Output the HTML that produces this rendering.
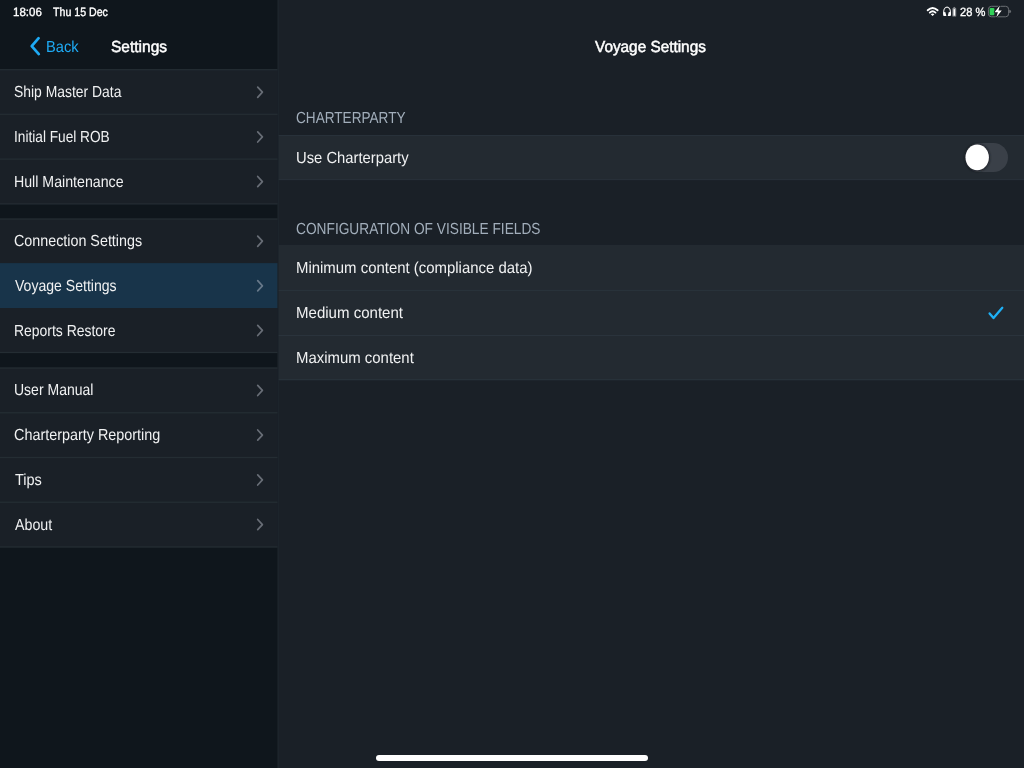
<!DOCTYPE html>
<html><head><meta charset="utf-8">
<style>
*{margin:0;padding:0;box-sizing:border-box}
html,body{width:1024px;height:768px;overflow:hidden;background:#1a2027;font-family:"Liberation Sans",sans-serif;color:#fff}
.abs{position:absolute}
.t{position:absolute;white-space:nowrap;transform-origin:0 0;text-rendering:geometricPrecision}
.c-blue{color:#1eaaf4}
.c-lbl{color:#f0f1f2}
.c-hdr{color:#a2aebb}
</style></head><body>
<svg class="abs" style="left:0;top:0" width="1024" height="768" viewBox="0 0 1024 768" shape-rendering="geometricPrecision">
 <rect x="0" y="0" width="1024" height="768" fill="#1a2027"/>
 <rect x="0" y="0" width="277.6" height="768" fill="#0f161c"/>
 <rect x="0" y="69.7" width="277.6" height="134.20" fill="#1a2027"/>
 <rect x="0" y="69.05" width="277.6" height="1.3" fill="#242d33"/>
 <rect x="0" y="113.65" width="277.6" height="1.3" fill="#242d33"/>
 <rect x="0" y="158.45" width="277.6" height="1.3" fill="#242d33"/>
 <rect x="0" y="203.25" width="277.6" height="1.3" fill="#242d33"/>
 <rect x="0" y="219.0" width="277.6" height="133.50" fill="#1a2027"/>
 <rect x="0" y="218.35" width="277.6" height="1.3" fill="#242d33"/>
 <rect x="0" y="351.85" width="277.6" height="1.3" fill="#242d33"/>
 <rect x="0" y="368.0" width="277.6" height="179.00" fill="#1a2027"/>
 <rect x="0" y="367.35" width="277.6" height="1.3" fill="#242d33"/>
 <rect x="0" y="412.10" width="277.6" height="1.3" fill="#242d33"/>
 <rect x="0" y="456.85" width="277.6" height="1.3" fill="#242d33"/>
 <rect x="0" y="501.60" width="277.6" height="1.3" fill="#242d33"/>
 <rect x="0" y="546.35" width="277.6" height="1.3" fill="#242d33"/>
 <rect x="0" y="263.1" width="277.6" height="44.9" fill="#18344a"/>
 <rect x="277.6" y="0" width="1.1" height="768" fill="#1f272e"/>
 <rect x="278.70000000000005" y="135.2" width="745.30" height="44.6" fill="#232a31"/>
 <rect x="278.70000000000005" y="135.0" width="745.30" height="1" fill="#28313a"/>
 <rect x="278.70000000000005" y="179.1" width="745.30" height="1" fill="#28313a"/>
 <rect x="278.70000000000005" y="244.9" width="745.30" height="135.3" fill="#232a31"/>
 <rect x="278.70000000000005" y="289.90" width="745.30" height="1" fill="#2a333c"/>
 <rect x="278.70000000000005" y="335.00" width="745.30" height="1" fill="#2a333c"/>
 <rect x="278.70000000000005" y="379.20" width="745.30" height="1" fill="#2a333c"/>
</svg>
<svg class="abs" style="left:0;top:0" width="1024" height="768" viewBox="0 0 1024 768">
 <g fill="none" stroke="#c8cdd6" stroke-opacity="0.45" stroke-width="1.7" stroke-linecap="round" stroke-linejoin="round">
  <path d="M257.7 87.1 L262.4 92.2 L257.7 97.3"/>
  <path d="M257.7 131.8 L262.4 136.9 L257.7 142.0"/>
  <path d="M257.7 176.5 L262.4 181.6 L257.7 186.7"/>
  <path d="M257.7 236.1 L262.4 241.2 L257.7 246.3"/>
  <path d="M257.7 280.7 L262.4 285.8 L257.7 290.9"/>
  <path d="M257.7 325.3 L262.4 330.4 L257.7 335.5"/>
  <path d="M257.7 385.3 L262.4 390.4 L257.7 395.5"/>
  <path d="M257.7 430.0 L262.4 435.1 L257.7 440.2"/>
  <path d="M257.7 474.8 L262.4 479.9 L257.7 485.0"/>
  <path d="M257.7 519.5 L262.4 524.6 L257.7 529.7"/>
 </g>
 <path d="M38.6 38.2 L31.7 46.2 L38.8 54.1" fill="none" stroke="#1eaaf4" stroke-width="2.7" stroke-linecap="round" stroke-linejoin="round"/>
 <path d="M989.6 313.4 L993.5 318.0 L1002.3 307.8" fill="none" stroke="#1eb0f5" stroke-width="2.3" stroke-linecap="round" stroke-linejoin="round"/>
 <!-- toggle -->
 <rect x="965" y="143" width="43" height="29" rx="14.5" ry="14.5" fill="#3a4048"/>
 <defs><filter id="sh" x="-50%" y="-50%" width="200%" height="200%"><feGaussianBlur stdDeviation="0.9"/></filter></defs>
 <ellipse cx="977.3" cy="157.6" rx="12.6" ry="13.6" fill="#15191e" opacity="0.75" filter="url(#sh)"/>
 <ellipse cx="977.2" cy="157.4" rx="11.7" ry="12.8" fill="#ffffff"/>
 <!-- home indicator -->
 <rect x="376" y="755" width="272" height="6" rx="3" fill="#ffffff"/>
 <!-- wifi -->
 <g fill="none" stroke="#ffffff" stroke-width="1.9" stroke-linecap="round">
  <path d="M927.7 10.3 Q932.6 5.6 937.6 10.3"/>
  <path d="M929.8 12.6 Q932.6 10.1 935.5 12.6"/>
 </g>
 <path d="M930.8 14.3 L932.6 16.1 L934.4 14.3 Q932.6 12.8 930.8 14.3 Z" fill="#ffffff"/>
 <!-- headphones -->
 <path d="M943.7 13.8 L943.7 11.6 A3.35 4.4 0 0 1 950.4 11.6 L950.4 13.8" fill="none" stroke="#e8e8e8" stroke-width="1.15"/>
 <path d="M943.1 12.2 L945.3 12.0 L946.3 15.6 Q946.3 16.1 945.7 16.1 L944.2 16.1 Q943.1 16.1 943.1 15 Z" fill="#ffffff"/>
 <path d="M951.0 12.2 L948.8 12.0 L947.8 15.6 Q947.8 16.1 948.4 16.1 L949.9 16.1 Q951.0 16.1 951.0 15 Z" fill="#ffffff"/>
 <path d="M952.4 8.4 L954.3 6.7 L956.2 8.4 L956.2 16 Q956.2 16.6 955.6 16.6 L953 16.6 Q952.4 16.6 952.4 16 Z" fill="#8d9094"/>
 <rect x="953.6" y="9.2" width="1.4" height="6.4" fill="#ffffff"/>
 <!-- battery -->
 <rect x="988.4" y="6.3" width="20.2" height="10.5" rx="3" fill="none" stroke="#6a6e73" stroke-width="1"/>
 <path d="M1009.2 9.7 A1.9 1.7 0 0 1 1009.2 13.1 Z" fill="#6a6e73"/>
 <rect x="989.6" y="7.9" width="4.8" height="7.3" rx="1.2" fill="#30d158"/>
 <path d="M999.9 5.4 L994.5 12.2 L997.9 12.2 L996.2 17.6 L1001.8 10.5 L998.4 10.5 Z" fill="#15191e" stroke="#15191e" stroke-width="1.4" stroke-linejoin="round"/>
 <path d="M999.9 5.4 L994.5 12.2 L997.9 12.2 L996.2 17.6 L1001.8 10.5 L998.4 10.5 Z" fill="#ffffff"/>
</svg>
<div class="t " style="left:13.44px;top:5.5px;font-size:12px;line-height:12px;transform:scaleX(0.9586);-webkit-text-stroke:0.35px currentColor;color:#ffffff">18:06</div>
<div class="t " style="left:52.70px;top:5.5px;font-size:12px;line-height:12px;transform:scaleX(0.8855);-webkit-text-stroke:0.35px currentColor;color:#ffffff">Thu 15 Dec</div>
<div class="t c-blue" style="left:46.19px;top:40.2px;font-size:16px;line-height:16px;transform:scaleX(0.9147)">Back</div>
<div class="t " style="left:111.10px;top:40.2px;font-size:16px;line-height:16px;transform:scaleX(0.9690);-webkit-text-stroke:0.5px currentColor;color:#ffffff">Settings</div>
<div class="t " style="left:595.30px;top:39.9px;font-size:16px;line-height:16px;transform:scaleX(0.9586);-webkit-text-stroke:0.5px currentColor;color:#ffffff">Voyage Settings</div>
<div class="t c-lbl" style="left:13.73px;top:85.3px;font-size:16px;line-height:16px;transform:scaleX(0.8691)">Ship Master Data</div>
<div class="t c-lbl" style="left:13.75px;top:130.3px;font-size:16px;line-height:16px;transform:scaleX(0.8545)">Initial Fuel ROB</div>
<div class="t c-lbl" style="left:13.71px;top:175.3px;font-size:16px;line-height:16px;transform:scaleX(0.8861)">Hull Maintenance</div>
<div class="t c-lbl" style="left:13.71px;top:234.1px;font-size:16px;line-height:16px;transform:scaleX(0.8944)">Connection Settings</div>
<div class="t c-lbl" style="left:14.60px;top:279.1px;font-size:16px;line-height:16px;transform:scaleX(0.8783)">Voyage Settings</div>
<div class="t c-lbl" style="left:13.73px;top:324.1px;font-size:16px;line-height:16px;transform:scaleX(0.8713)">Reports Restore</div>
<div class="t c-lbl" style="left:13.72px;top:383.2px;font-size:16px;line-height:16px;transform:scaleX(0.8753)">User Manual</div>
<div class="t c-lbl" style="left:13.70px;top:428.1px;font-size:16px;line-height:16px;transform:scaleX(0.8988)">Charterparty Reporting</div>
<div class="t c-lbl" style="left:14.60px;top:473.1px;font-size:16px;line-height:16px;transform:scaleX(0.9069)">Tips</div>
<div class="t c-lbl" style="left:14.60px;top:518.0px;font-size:16px;line-height:16px;transform:scaleX(0.8905)">About</div>
<div class="t c-hdr" style="left:296.15px;top:111.2px;font-size:16px;line-height:16px;transform:scaleX(0.8500)">CHARTERPARTY</div>
<div class="t c-lbl" style="left:296.28px;top:151.0px;font-size:16px;line-height:16px;transform:scaleX(0.9240)">Use Charterparty</div>
<div class="t c-hdr" style="left:296.14px;top:221.5px;font-size:16px;line-height:16px;transform:scaleX(0.8577)">CONFIGURATION OF VISIBLE FIELDS</div>
<div class="t c-lbl" style="left:295.77px;top:261.2px;font-size:16px;line-height:16px;transform:scaleX(0.9329)">Minimum content (compliance data)</div>
<div class="t c-lbl" style="left:295.76px;top:306.25px;font-size:16px;line-height:16px;transform:scaleX(0.9398)">Medium content</div>
<div class="t c-lbl" style="left:295.77px;top:351.25px;font-size:16px;line-height:16px;transform:scaleX(0.9328)">Maximum content</div>
<div class="t " style="left:960.00px;top:5.6px;font-size:12px;line-height:12px;transform:scaleX(0.9259);-webkit-text-stroke:0.35px currentColor;color:#ffffff">28 %</div>
</body></html>
